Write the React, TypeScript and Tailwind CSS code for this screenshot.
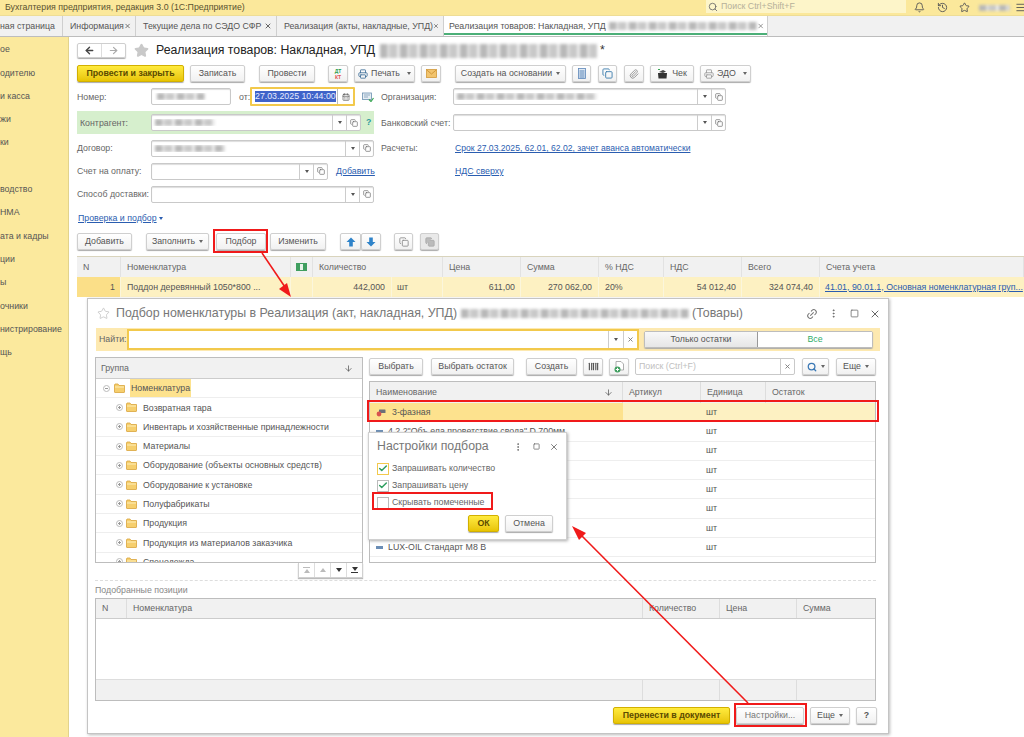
import type { ReactNode } from "react";
import {
  ArrowDown,
  ArrowLeft,
  ArrowRight,
  Barcode,
  Bell,
  CalendarDays,
  Check,
  Copy,
  History,
  Link2,
  Menu,
  MoreVertical,
  Paperclip,
  Printer,
  Search,
  Square,
  Star,
  X,
} from "lucide-react";

const smudge =
  "blur-[1.5px] bg-[repeating-linear-gradient(90deg,#b8b8b8_0_7px,#dcdcdc_7px_10px,#c8c8c8_10px_17px,#ececec_17px_20px)]";

function Caret() {
  return <span className="ml-1 inline-block h-0 w-0 border-x-[2.5px] border-t-[3px] border-x-transparent border-t-[#666]" />;
}

function Btn({ className = "", children }: { className?: string; children?: ReactNode }) {
  return (
    <div
      className={`flex h-[17px] shrink-0 items-center justify-center whitespace-nowrap rounded-[2px] border border-[#cfcfcf] bg-gradient-to-b from-white to-[#f1f1f1] text-[#555] shadow-[0_1px_1px_#aaa] ${className}`}
    >
      {children}
    </div>
  );
}

function YellowBtn({ className = "", children }: { className?: string; children?: ReactNode }) {
  return (
    <div
      className={`flex h-[17px] shrink-0 items-center justify-center whitespace-nowrap rounded-[2px] border border-[#d2b000] bg-gradient-to-b from-[#ffeb3c] to-[#e8c400] font-bold text-[#5b4b00] shadow-[0_1px_1px_#aaa] ${className}`}
    >
      {children}
    </div>
  );
}

function Field({
  className = "",
  children,
  pick = true,
  open = true,
}: {
  className?: string;
  children?: ReactNode;
  pick?: boolean;
  open?: boolean;
}) {
  return (
    <div className={`flex h-[17px] shrink-0 items-center rounded-[2px] border border-[#c9c9c9] bg-white shadow-[inset_0_1px_1px_#ddd] ${className}`}>
      <div className="flex min-w-0 flex-1 items-center overflow-hidden pl-[3px]">{children}</div>
      {pick && (
        <div className="flex h-full w-[14px] items-center justify-center border-l border-[#ccc]">
          <span className="inline-block h-0 w-0 border-x-[2.5px] border-t-[3px] border-x-transparent border-t-[#555]" />
        </div>
      )}
      {open && (
        <div className="flex h-full w-[14px] items-center justify-center border-l border-[#ccc]">
          <Copy size={8} className="text-[#666]" />
        </div>
      )}
    </div>
  );
}

function Label({ className = "", children }: { className?: string; children: ReactNode }) {
  return <div className={`shrink-0 whitespace-nowrap pt-[1px] text-[#666] ${className}`}>{children}</div>;
}

function Folder() {
  return (
    <svg width="11" height="10" viewBox="0 0 11 10" className="shrink-0">
      <path d="M0.5 2 L0.5 9 Q0.5 9.5 1 9.5 L10 9.5 Q10.5 9.5 10.5 9 L10.5 2.5 L5 2.5 L4 1 L1 1 Z" fill="#f6cf6e" stroke="#d9a53c" strokeWidth="0.8" />
      <path d="M1 4 H10" stroke="#fdeeb9" strokeWidth="1" />
    </svg>
  );
}

function TreeToggle({ minus = false }: { minus?: boolean }) {
  return (
    <span className="relative flex h-[7px] w-[7px] shrink-0 items-center justify-center rounded-full border border-[#bbb]">
      <span className="h-px w-[3px] bg-[#999]" />
      {!minus && <span className="absolute h-[3px] w-px bg-[#999]" />}
    </span>
  );
}

function Tab({ className = "", children, close = true }: { className?: string; children: ReactNode; close?: boolean }) {
  return (
    <div className={`flex h-full shrink-0 items-center justify-between border-r border-[#cfcfcf] pl-[7px] pr-[4px] text-[#555] ${className}`}>
      <span className="whitespace-nowrap">{children}</span>
      {close && <X size={8} strokeWidth={3} className="text-[#666]" />}
    </div>
  );
}

function FatArrow({ down = false }: { down?: boolean }) {
  return (
    <svg width="10" height="10" viewBox="0 0 10 10" className={down ? "rotate-180" : ""}>
      <path d="M5 0.5 L9.5 5 L6.8 5 L6.8 9.5 L3.2 9.5 L3.2 5 L0.5 5 Z" fill="#2f83c9" />
    </svg>
  );
}

const sideItems = ["ое", "одителю", "и касса", "жи", "ки", "", "водство", "НМА", "ата и кадры", "ции", "ы", "очники", "нистрирование", "щь"];

const groups = [
  "Возвратная тара",
  "Инвентарь и хозяйственные принадлежности",
  "Материалы",
  "Оборудование (объекты основных средств)",
  "Оборудование к установке",
  "Полуфабрикаты",
  "Продукция",
  "Продукция из материалов заказчика",
  "Спецодежда",
];

const linkCls = "whitespace-nowrap text-[#2a5db0] underline";

function TopBar() {
  return (
    <div className="flex h-[15px] items-center justify-between bg-[#fbe89b] pl-[5px]">
      <span className="text-[#5a5230]">Бухгалтерия предприятия, редакция 3.0 (1С:Предприятие)</span>
      <div className="flex h-full items-center">
        <div className="mb-[2px] flex h-[13px] w-[200px] items-center gap-[3px] bg-[#fdf5c9] pl-[2px] text-[#b5b09a]">
          <Search size={10} className="text-[#666]" />
          Поиск Ctrl+Shift+F
        </div>
        <Bell size={11} className="ml-[8px] text-[#555]" />
        <History size={11} className="ml-[12px] text-[#555]" />
        <Star size={11} className="ml-[11px] text-[#555]" />
        <div className={`ml-[9px] h-[6px] w-[31px] ${smudge}`} />
        <Menu size={11} className="ml-[5px] mr-[-2px] text-[#555]" />
      </div>
    </div>
  );
}

function TabsBar() {
  return (
    <div className="flex h-[22px] border-t border-[#eedd96] border-b border-b-[#bdbdbd] bg-[#f1f1f1]">
      <Tab className="w-[63px] !px-0" close={false}>ная страница</Tab>
      <Tab className="w-[73px]">Информация</Tab>
      <Tab className="w-[141px]">Текущие дела по СЭДО СФР</Tab>
      <Tab className="w-[167px]">Реализация (акты, накладные, УПД)</Tab>
      <div className="relative flex h-full w-[324px] items-center justify-between border-r border-[#cfcfcf] bg-white pl-[5px] pr-[3px] text-[#555]">
        <span className="flex items-center gap-[3px] whitespace-nowrap">
          Реализация товаров: Накладная, УПД
          <span className={`h-[8px] w-[148px] ${smudge}`} />
        </span>
        <X size={8} strokeWidth={2.5} className="text-[#777]" />
        <div className="absolute inset-x-0 bottom-[1px] h-[2px] bg-[#4caf78]" />
      </div>
    </div>
  );
}

function Sidebar() {
  return (
    <div className="flex w-[69px] shrink-0 flex-col border-r border-[#e2d38c] bg-[#fbe99d] pt-[1px] text-[#555]">
      {sideItems.map((t, i) => (
        <div key={i} className="flex h-[23.3px] items-center whitespace-nowrap">
          {t}
        </div>
      ))}
    </div>
  );
}

function DocToolbar() {
  return (
    <div className="mt-[7px] flex h-[17px] items-center">
      <YellowBtn className="w-[107px]">Провести и закрыть</YellowBtn>
      <Btn className="ml-[6px] w-[55px]">Записать</Btn>
      <Btn className="ml-[14px] w-[56px]">Провести</Btn>
      <Btn className="ml-[13px] w-[20px] flex-col text-[5px] font-bold leading-[6px]">
        <span className="text-[#2f9e4f]">ДТ</span>
        <span className="text-[#e05050]">КТ</span>
      </Btn>
      <Btn className="ml-[6px] w-[61px] gap-[3px]">
        <Printer size={10} className="text-[#3f6f99]" />
        Печать
        <Caret />
      </Btn>
      <Btn className="ml-[6px] w-[20px]">
        <svg width="11" height="9" viewBox="0 0 11 9">
          <rect x="0.5" y="0.5" width="10" height="8" fill="#f2c46e" stroke="#d29a3a" strokeWidth="0.8" />
          <path d="M0.8 1 L5.5 5 L10.2 1" fill="none" stroke="#c98d2e" strokeWidth="0.8" />
        </svg>
      </Btn>
      <Btn className="ml-[14px] w-[111px]">
        Создать на основании
        <Caret />
      </Btn>
      <Btn className="ml-[6px] w-[19px]">
        <svg width="8" height="11" viewBox="0 0 8 11">
          <rect x="0.5" y="0.5" width="7" height="10" fill="#dfe9f4" stroke="#5b86b8" strokeWidth="0.8" />
          <path d="M1.5 3 H6.5 M1.5 5 H6.5 M1.5 7 H6.5 M1.5 9 H6.5" stroke="#5b86b8" strokeWidth="1" />
        </svg>
      </Btn>
      <Btn className="ml-[7px] w-[19px]">
        <Copy size={11} strokeWidth={2} className="text-[#3e7fae]" />
      </Btn>
      <Btn className="ml-[7px] w-[20px]">
        <Paperclip size={10} className="text-[#888]" />
      </Btn>
      <Btn className="ml-[6px] w-[44px] gap-[4px]">
        <svg width="11" height="10" viewBox="0 0 11 10">
          <path d="M1 4 H10 L9.5 9.5 H1.5 Z" fill="#333" />
          <path d="M2 3 L6 1 L9 2.5 L6 4 Z" fill="#444" />
          <path d="M1 0.5 H3" stroke="#3aa655" strokeWidth="1" />
        </svg>
        Чек
      </Btn>
      <Btn className="ml-[6px] w-[51px] gap-[3px]">
        <Printer size={10} className="text-[#999]" />
        ЭДО
        <Caret />
      </Btn>
    </div>
  );
}

function DocForm() {
  return (
    <>
      <div className="mt-[5px] flex h-[19px] items-center">
        <Label className="w-[74px]">Номер:</Label>
        <Field className="w-[80px]" pick={false} open={false}>
          <span className={`ml-[2px] h-[7px] w-[48px] ${smudge}`} />
        </Field>
        <Label className="ml-[8px] w-[11px]">от:</Label>
        <div className="flex h-[19px] w-[105px] items-center rounded-[1px] border-2 border-[#f2c94c] bg-white pl-[3px] text-[#e8ecff]">
          <span className="whitespace-nowrap bg-[#3f63c9] leading-[11px]">27.03.2025 10:44:00</span>
          <div className="ml-auto flex h-full w-[16px] items-center justify-center border-l border-[#bbb]">
            <CalendarDays size={8} className="text-[#555]" />
          </div>
        </div>
        <svg width="12" height="10" viewBox="0 0 12 10" className="ml-[7px] shrink-0">
          <rect x="0.5" y="1" width="9" height="6.5" fill="#e6edf3" stroke="#6a8fb0" strokeWidth="0.8" />
          <path d="M2 3 H8 M2 5 H6" stroke="#6a8fb0" strokeWidth="0.7" />
          <path d="M7 7.5 L9 9.5 L11.5 6" fill="none" stroke="#3aa655" strokeWidth="1.2" />
        </svg>
        <Label className="ml-[7px] w-[72px]">Организация:</Label>
        <Field className="w-[273px]">
          <span className={`h-[7px] w-[140px] ${smudge}`} />
        </Field>
      </div>
      <div className="mt-[5px] flex h-[23px] items-center">
        <div className="flex h-full w-[297px] items-center bg-[#d6efcd] pl-[3px]">
          <Label className="w-[71px]">Контрагент:</Label>
          <Field className="w-[210px]">
            <span className={`h-[7px] w-[60px] ${smudge}`} />
          </Field>
          <span className="ml-[5px] font-bold text-[#2d9b9b]">?</span>
        </div>
        <Label className="ml-[7px] w-[72px]">Банковский счет:</Label>
        <Field className="w-[273px]" />
      </div>
      <div className="mt-[5px] flex h-[18px] items-center">
        <Label className="w-[74px]">Договор:</Label>
        <Field className="w-[223px]">
          <span className={`h-[7px] w-[70px] ${smudge}`} />
        </Field>
        <Label className="ml-[7px] w-[74px]">Расчеты:</Label>
        <span className={`text-[8.6px] ${linkCls}`}>Срок 27.03.2025, 62.01, 62.02, зачет аванса автоматически</span>
      </div>
      <div className="mt-[5px] flex h-[18px] items-center">
        <Label className="w-[74px]">Счет на оплату:</Label>
        <Field className="w-[177px]" />
        <span className={`ml-[8px] w-[46px] ${linkCls}`}>Добавить</span>
        <span className={`ml-[73px] ${linkCls}`}>НДС сверху</span>
      </div>
      <div className="mt-[5px] flex h-[18px] items-center">
        <Label className="w-[74px]">Способ доставки:</Label>
        <Field className="w-[223px]" />
      </div>
      <div className="mt-[6px] flex h-[18px] items-center pl-[1px]">
        <span className={linkCls}>Проверка и подбор</span>
        <span className="ml-[2px] inline-block h-0 w-0 border-x-[2.5px] border-t-[3px] border-x-transparent border-t-[#2a5db0]" />
      </div>
      <div className="mt-[6px] flex h-[17px] items-center">
        <Btn className="w-[55px]">Добавить</Btn>
        <Btn className="ml-[14px] w-[63px]">
          Заполнить
          <Caret />
        </Btn>
        <Btn className="ml-[7px] w-[50px]">Подбор</Btn>
        <Btn className="ml-[4px] w-[56px]">Изменить</Btn>
        <Btn className="ml-[14px] w-[21px]">
          <FatArrow />
        </Btn>
        <Btn className="w-[20px]">
          <FatArrow down />
        </Btn>
        <Btn className="ml-[13px] w-[19px]">
          <Copy size={10} className="text-[#888]" />
        </Btn>
        <Btn className="ml-[7px] w-[19px] bg-none bg-[#e9e9e9]">
          <Copy size={10} className="fill-[#bbb] text-[#aaa]" />
        </Btn>
      </div>
    </>
  );
}

function DocTable() {
  const cols = "grid grid-cols-[44px_170px_22px_79px_51px_78px_78px_65px_78px_78px_1fr]";
  const head = "flex items-center border-r border-[#e2e2e2] pl-[6px] text-[#666]";
  const cell = "flex items-center border-r border-[#fbf6dc]";
  return (
    <div className="mt-[6px] w-[947px] border-t border-[#d9d4bd] text-[#555]">
      <div className={`${cols} h-[20px] bg-[#f1f1f1]`}>
        <div className={head}>N</div>
        <div className={head}>Номенклатура</div>
        <div className={`${head} justify-center !pl-0`}>
          <span className="flex h-[8px] w-[11px] items-center justify-center bg-[#3f9e5f]">
            <span className="h-[6px] w-[3px] bg-[#e8f3ea]" />
          </span>
        </div>
        <div className={`${head} col-span-2`}>Количество</div>
        <div className={head}>Цена</div>
        <div className={head}>Сумма</div>
        <div className={head}>% НДС</div>
        <div className={head}>НДС</div>
        <div className={head}>Всего</div>
        <div className={head}>Счета учета</div>
      </div>
      <div className={`${cols} h-[20px] whitespace-nowrap bg-[#fdf1c2]`}>
        <div className={`${cell} justify-end bg-[#fbdf88] pr-[5px]`}>1</div>
        <div className={`${cell} pl-[6px]`}>Поддон деревянный 1050*800 ...</div>
        <div className={cell} />
        <div className={`${cell} justify-end pr-[6px]`}>442,000</div>
        <div className={`${cell} pl-[5px]`}>шт</div>
        <div className={`${cell} justify-end pr-[5px]`}>611,00</div>
        <div className={`${cell} justify-end pr-[6px]`}>270 062,00</div>
        <div className={`${cell} pl-[6px]`}>20%</div>
        <div className={`${cell} justify-end pr-[5px]`}>54 012,40</div>
        <div className={`${cell} justify-end pr-[6px]`}>324 074,40</div>
        <div className={`flex items-center pl-[5px] ${linkCls}`}>41.01, 90.01.1, Основная номенклатурная груп...</div>
      </div>
    </div>
  );
}

function GroupPanel() {
  return (
    <div className="w-[268px] shrink-0">
      <div className="h-[206px] overflow-hidden border border-[#bdbdbd] text-[#555]">
        <div className="flex h-[21px] items-center justify-between border-b border-[#ccc] bg-[#f1f1f1] px-[5px] text-[#666]">
          Группа
          <ArrowDown size={9} className="mr-[4px] text-[#555]" />
        </div>
        <div className="flex h-[19.3px] items-center gap-[3px] border-b border-[#eee] pl-[7px]">
          <TreeToggle minus />
          <span className="ml-[1px]"><Folder /></span>
          <span className="ml-[2px] flex h-full items-center bg-[#fde28e] px-[1px]">Номенклатура</span>
        </div>
        {groups.map((g) => (
          <div key={g} className="flex h-[19.3px] shrink-0 items-center gap-[3px] border-b border-[#eee] pl-[20px]">
            <TreeToggle />
            <Folder />
            <span className="ml-[3px] whitespace-nowrap pt-[1px]">{g}</span>
          </div>
        ))}
      </div>
      <ScrollBtns />
    </div>
  );
}

function ScrollBtns() {
  const tri = "inline-block h-0 w-0 border-x-[3.5px] border-x-transparent";
  return (
    <div className="ml-auto flex h-[15px] w-[65px] border border-t-0 border-[#d0d0d0] shadow-[0_1px_1px_#bbb]">
      <div className="flex flex-1 flex-col items-center justify-center border-r border-[#ddd]">
        <span className="mb-px h-px w-[7px] bg-[#bbb]" />
        <span className={`${tri} border-b-[4px] border-b-[#bbb]`} />
      </div>
      <div className="flex flex-1 items-center justify-center border-r border-[#ddd]">
        <span className={`${tri} border-b-[4px] border-b-[#bbb]`} />
      </div>
      <div className="flex flex-1 items-center justify-center border-r border-[#ddd]">
        <span className={`${tri} border-t-[4px] border-t-[#333]`} />
      </div>
      <div className="flex flex-1 flex-col items-center justify-center">
        <span className={`${tri} border-t-[4px] border-t-[#333]`} />
        <span className="mt-px h-px w-[7px] bg-[#333]" />
      </div>
    </div>
  );
}

function ItemsPanel() {
  const row = "grid h-[19.3px] grid-cols-[253px_78px_65px_1fr] items-center border-b border-[#eee]";
  const rest = ['4.2.2"Объ.ела проветствие свода" D 700мм', "", "", "", "", "", "LUX-OIL Стандарт М8 В"];
  return (
    <div className="ml-[6px] w-[507px]">
      <div className="mt-[1px] flex h-[17px] items-center">
        <Btn className="w-[54px]">Выбрать</Btn>
        <Btn className="ml-[8px] w-[83px]">Выбрать остаток</Btn>
        <Btn className="ml-[12px] w-[51px]">Создать</Btn>
        <Btn className="ml-[6px] w-[20px]">
          <Barcode size={11} strokeWidth={2.5} className="text-[#555]" />
        </Btn>
        <Btn className="ml-[6px] w-[20px]">
          <svg width="10" height="12" viewBox="0 0 10 12">
            <path d="M2 0.5 H7 L9.5 3 V9 H2 Z" fill="#fff" stroke="#999" strokeWidth="0.8" />
            <circle cx="3.5" cy="8.5" r="3" fill="#3f9e5f" />
            <path d="M1.8 8.5 H5.2 M3.5 6.8 V10.2" stroke="#fff" strokeWidth="1" />
          </svg>
        </Btn>
        <Field className="ml-[6px] w-[160px] !shadow-none" pick={false} open={false}>
          <span className="flex-1 text-[#c0c0c0]">Поиск (Ctrl+F)</span>
          <span className="flex h-[15px] w-[14px] items-center justify-center border-l border-[#ccc]">
            <X size={7} strokeWidth={3} className="text-[#777]" />
          </span>
        </Field>
        <Btn className="ml-[7px] w-[27px]">
          <Search size={10} strokeWidth={3} className="text-[#3a78b5]" />
          <Caret />
        </Btn>
        <Btn className="ml-[7px] w-[40px]">
          Еще
          <Caret />
        </Btn>
      </div>
      <div className="mt-[6px] h-[182px] overflow-hidden border border-[#bdbdbd] text-[#555]">
        <div className="grid h-[21px] grid-cols-[253px_78px_65px_1fr] items-center bg-[#f1f1f1] text-[#666]">
          <div className="flex h-full items-center justify-between border-r border-[#ddd] pl-[6px] pr-[9px]">
            Наименование
            <ArrowDown size={9} className="text-[#555]" />
          </div>
          <div className="flex h-full items-center border-r border-[#ddd] pl-[6px]">Артикул</div>
          <div className="flex h-full items-center border-r border-[#ddd] pl-[6px]">Единица</div>
          <div className="pl-[6px]">Остаток</div>
        </div>
        <div className={`${row} bg-[#fdf1c2]`}>
          <div className="flex h-full items-center gap-[6px] bg-[#fde28e] pl-[6px]">
            <svg width="10" height="10" viewBox="0 0 10 10">
              <rect x="3" y="2.5" width="6.5" height="3.5" rx="0.5" fill="#6b6f78" />
              <circle cx="3" cy="7" r="2.4" fill="#d9534f" />
            </svg>
            3-фазная
          </div>
          <div />
          <div className="pl-[5px]">шт</div>
        </div>
        {rest.map((t, i) => (
          <div key={i} className={row}>
            <div className="flex items-center gap-[5px] whitespace-nowrap pl-[6px]">
              <span className="h-[3px] w-[7px] shrink-0 bg-[#6a8db5]" />
              {t}
            </div>
            <div />
            <div className="pl-[5px]">шт</div>
          </div>
        ))}
      </div>
    </div>
  );
}

function PickedTable() {
  const cols = "grid grid-cols-[31px_516px_77px_77px_1fr]";
  const cell = "flex items-center border-r border-[#ddd] pl-[6px]";
  return (
    <div className="ml-[7px] flex h-[103px] w-[781px] flex-col border border-[#bdbdbd] text-[#666]">
      <div className={`${cols} h-[20px] shrink-0 border-b border-[#ccc] bg-[#f1f1f1]`}>
        <div className={cell}>N</div>
        <div className={cell}>Номенклатура</div>
        <div className={cell}>Количество</div>
        <div className={cell}>Цена</div>
        <div className="flex items-center pl-[6px]">Сумма</div>
      </div>
      <div className="flex-1" />
      <div className={`${cols} h-[21px] shrink-0 border-t border-[#ddd] bg-[#f1f1f1]`}>
        <div />
        <div className="border-r border-[#ddd]" />
        <div className="border-r border-[#ddd]" />
        <div className="border-r border-[#ddd]" />
        <div />
      </div>
    </div>
  );
}

function PickerWindow() {
  return (
    <div className="absolute left-[87px] top-[298px] h-[436px] w-[802px] border border-[#c4c4c4] bg-white text-[#555] shadow-[1px_1px_3px_#bbb]">
      <div className="flex h-[29px] items-center pl-[9px] pr-[7px]">
        <Star size={13} strokeWidth={1.3} className="text-[#bbb]" />
        <span className="ml-[6px] whitespace-nowrap text-[12.4px] text-[#777]">Подбор номенклатуры в Реализация (акт, накладная, УПД)</span>
        <span className={`ml-[4px] h-[9px] w-[228px] ${smudge}`} />
        <span className="ml-[3px] whitespace-nowrap text-[12.4px] text-[#777]">(Товары)</span>
        <Link2 size={12} className="ml-auto -rotate-45 text-[#777]" />
        <MoreVertical size={11} className="ml-[10px] text-[#666]" />
        <Square size={9} strokeWidth={2} className="ml-[11px] text-[#666]" />
        <X size={12} className="ml-[10px] text-[#666]" />
      </div>
      <div className="mx-[8px] flex h-[23px] items-center bg-[#fde9b0] pl-[3px]">
        <span className="w-[28px] whitespace-nowrap text-[#666]">Найти:</span>
        <div className="flex h-[21px] w-[512px] items-center justify-end border-2 border-[#f2c94c] bg-white">
          <span className="flex h-full w-[15px] items-center justify-center border-l border-[#ccc]">
            <span className="inline-block h-0 w-0 border-x-[2.5px] border-t-[3px] border-x-transparent border-t-[#555]" />
          </span>
          <span className="flex h-full w-[14px] items-center justify-center border-l border-[#ccc]">
            <X size={7} strokeWidth={3} className="text-[#777]" />
          </span>
        </div>
        <div className="ml-[5px] flex h-[17px] w-[229px] rounded-[2px] border border-[#bdbdbd] shadow-[0_1px_1px_#aaa]">
          <div className="flex w-[113px] items-center justify-center border-r border-[#999] bg-gradient-to-b from-[#f8f8f8] to-[#e6e6e6]">Только остатки</div>
          <div className="flex flex-1 items-center justify-center bg-white text-[#2fae6a]">Все</div>
        </div>
      </div>
      <div className="mx-[7px] mt-[6px] flex">
        <GroupPanel />
        <ItemsPanel />
      </div>
      <div className="ml-[7px] mr-[12px] mt-[2px] h-[18px] border-t border-dashed border-[#ddd] pt-[5px] text-[#888]">Подобранные позиции</div>
      <PickedTable />
      <div className="mt-[6px] flex h-[17px] items-center justify-end pr-[11px]">
        <YellowBtn className="w-[117px]">Перенести в документ</YellowBtn>
        <Btn className="ml-[6px] w-[68px] text-[#777]">Настройки...</Btn>
        <Btn className="ml-[6px] w-[40px]">
          Еще
          <Caret />
        </Btn>
        <Btn className="ml-[6px] w-[21px] font-bold">?</Btn>
      </div>
    </div>
  );
}

function SettingsDialog() {
  const box = "flex h-[12px] w-[12px] shrink-0 items-center justify-center border border-[#bbb] bg-white";
  return (
    <div className="absolute left-[368px] top-[432px] h-[108px] w-[199px] border border-[#d0d0d0] bg-white px-[8px] text-[#666] shadow-[1px_1px_3px_#aaa]">
      <div className="flex h-[27px] items-center">
        <span className="whitespace-nowrap text-[12.3px] text-[#777]">Настройки подбора</span>
        <MoreVertical size={10} className="ml-auto text-[#666]" />
        <Square size={7} strokeWidth={2.5} className="ml-[10px] text-[#666]" />
        <X size={10} className="ml-[9px] mr-[-1px] text-[#666]" />
      </div>
      <div className="flex h-[17px] items-center gap-[3px]">
        <span className={`${box} !border-[#f2c94c]`}>
          <Check size={11} strokeWidth={3.5} className="text-[#2f9e5f]" />
        </span>
        Запрашивать количество
      </div>
      <div className="flex h-[17px] items-center gap-[3px]">
        <span className={box}>
          <Check size={11} strokeWidth={3.5} className="text-[#2f9e5f]" />
        </span>
        Запрашивать цену
      </div>
      <div className="flex h-[17px] items-center gap-[3px]">
        <span className={box} />
        Скрывать помеченные
      </div>
      <div className="mt-[4px] flex justify-end pr-[5px]">
        <YellowBtn className="w-[31px]">ОК</YellowBtn>
        <Btn className="ml-[6px] w-[48px]">Отмена</Btn>
      </div>
    </div>
  );
}

function Annotations() {
  const rect = "absolute border-2 border-[#f01a1a]";
  return (
    <>
      <div className={`${rect} left-[213px] top-[229px] h-[24px] w-[55px]`} />
      <div className={`${rect} left-[367px] top-[400px] h-[22px] w-[512px]`} />
      <div className={`${rect} left-[372px] top-[492px] h-[18px] w-[121px]`} />
      <div className={`${rect} left-[734px] top-[703px] h-[24px] w-[73px]`} />
      <svg className="absolute inset-0" width="1024" height="737" viewBox="0 0 1024 737" fill="none">
        <path d="M262 253 L287 290" stroke="#f01a1a" strokeWidth="1.6" />
        <path d="M291 297 L279 289 L287 283 Z" fill="#f01a1a" />
        <path d="M748 703 L578 532" stroke="#f01a1a" strokeWidth="1.6" />
        <path d="M572 526 L586 533 L579 540 Z" fill="#f01a1a" />
      </svg>
    </>
  );
}

export default function App() {
  return (
    <div className="relative h-[737px] w-[1024px] overflow-hidden bg-white font-['Liberation_Sans',Arial,sans-serif] text-[8.8px] leading-none">
      <TopBar />
      <TabsBar />
      <div className="flex h-[700px]">
        <Sidebar />
        <div className="flex-1 pl-[8px]">
          <div className="mt-[6px] flex h-[15px] items-center">
            <div className="flex h-[15px] w-[49px] rounded-[2px] border border-[#cfcfcf] shadow-[0_1px_1px_#aaa]">
              <div className="flex flex-1 items-center justify-center border-r border-[#ddd]">
                <ArrowLeft size={11} strokeWidth={3} className="text-[#444]" />
              </div>
              <div className="flex flex-1 items-center justify-center">
                <ArrowRight size={11} strokeWidth={2.5} className="text-[#aaa]" />
              </div>
            </div>
            <Star size={15} className="ml-[8px] fill-[#c9c9c9] text-[#c9c9c9]" />
            <span className="ml-[7px] whitespace-nowrap text-[12.3px] text-[#222]">Реализация товаров: Накладная, УПД</span>
            <span className={`ml-[5px] h-[14px] w-[217px] ${smudge}`} />
            <span className="ml-[3px] text-[12.3px] text-[#333]">*</span>
          </div>
          <DocToolbar />
          <DocForm />
          <DocTable />
        </div>
      </div>
      <PickerWindow />
      <SettingsDialog />
      <Annotations />
    </div>
  );
}
